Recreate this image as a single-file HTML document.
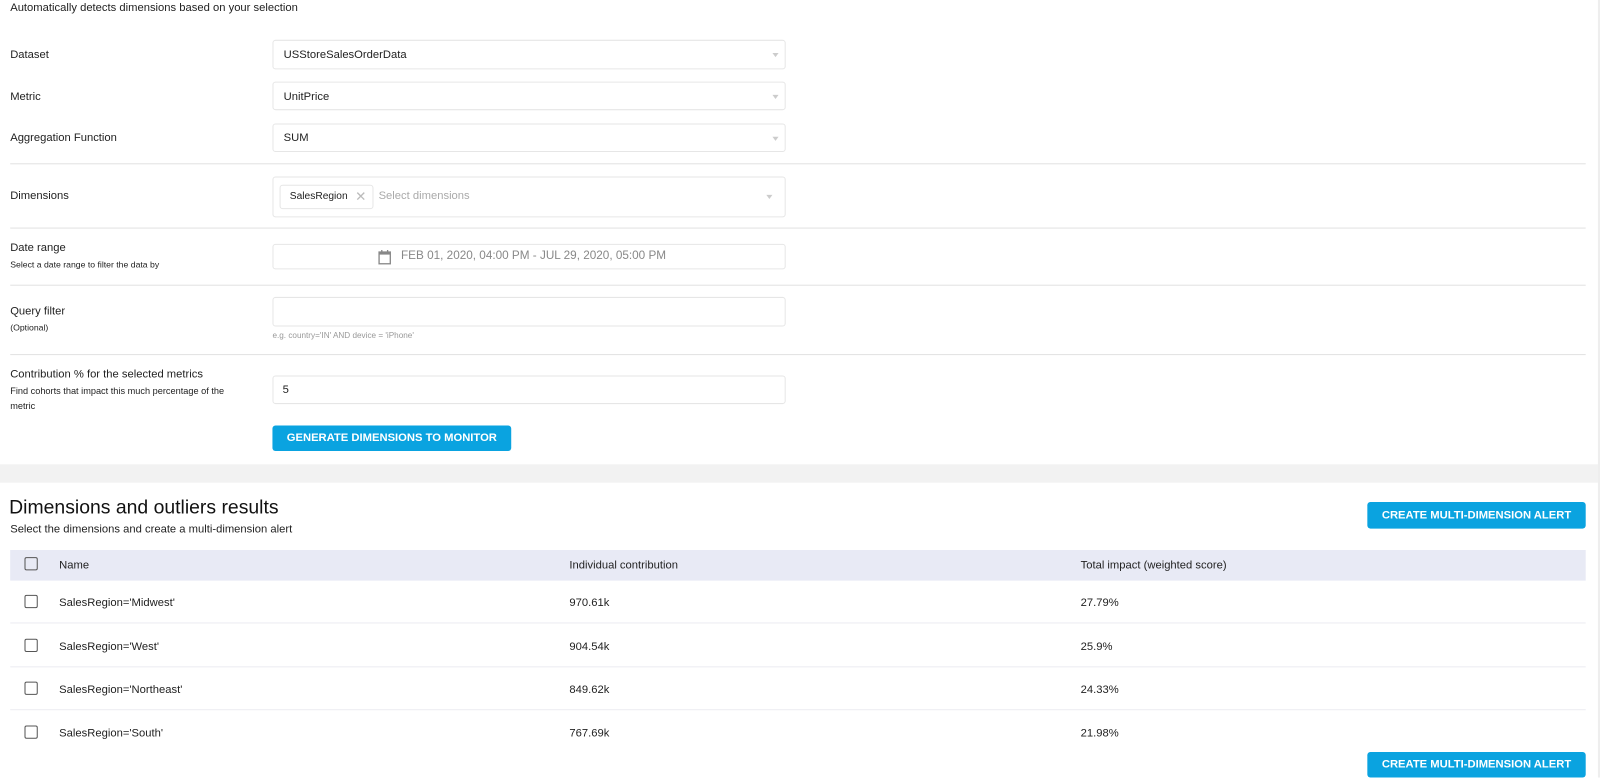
<!DOCTYPE html>
<html><head><style>
*{box-sizing:border-box;margin:0;padding:0}
body{width:1600px;height:777px;overflow:hidden;background:#fff;font-family:"Liberation Sans",sans-serif;color:#222;font-size:11px;position:relative}
#w{position:absolute;left:0;top:0;width:1568px;height:762px;transform:scale(1.0204);transform-origin:0 0}
.a{position:absolute}
.inp{position:absolute;left:267px;width:503px;border:1px solid #e6e6e6;border-radius:3px;background:#fff}
.inp span{position:absolute;left:10px;font-size:11px;color:#222}
.arr{position:absolute;right:6px;width:0;height:0;border-left:3px solid transparent;border-right:3px solid transparent;border-top:4px solid #ccc}
.hr{position:absolute;left:10px;width:1544px;height:1px;background:#e2e2e2}
.btn{position:absolute;background:#0aa3e0;color:#fff;font-weight:bold;font-size:11px;border-radius:3px;text-align:center}
.cb{position:absolute;left:24px;width:13px;height:13px;border:1.5px solid #555;border-radius:2px}
.rl{position:absolute;left:10px;width:1544px;height:1px;background:#ececf2}
</style></head><body><div id="w">
<div class="a" style="left:10px;top:2px">Automatically detects dimensions based on your selection</div>

<div class="a" style="left:10px;top:48px">Dataset</div>
<div class="inp" style="top:39px;height:29px"><span style="top:8px">USStoreSalesOrderData</span><i class="arr" style="top:12px"></i></div>
<div class="a" style="left:10px;top:89px">Metric</div>
<div class="inp" style="top:80px;height:28px"><span style="top:8px">UnitPrice</span><i class="arr" style="top:12px"></i></div>
<div class="a" style="left:10px;top:129px">Aggregation Function</div>
<div class="inp" style="top:121px;height:28px"><span style="top:7px">SUM</span><i class="arr" style="top:12px"></i></div>
<div class="hr" style="top:160px"></div>

<div class="a" style="left:10px;top:186px">Dimensions</div>
<div class="inp" style="top:173px;height:40px">
<div class="a" style="left:6px;top:7px;width:92px;height:24px;border:1px solid #e6e6e6;border-radius:3px"><span style="left:9px;top:5px;font-size:10px">SalesRegion</span><span style="left:73px;top:3px;color:#bbb;font-size:13px">✕</span></div>
<span style="left:103px;top:12px;color:#aaa">Select dimensions</span><i class="arr" style="top:17px;right:12px"></i></div>
<div class="hr" style="top:223px"></div>

<div class="a" style="left:10px;top:237px">Date range</div>
<div class="a" style="left:10px;top:254px;font-size:8.5px">Select a date range to filter the data by</div>
<div class="inp" style="top:239px;height:25px">
<svg class="a" style="left:102px;top:4px" width="14" height="16" viewBox="0 0 14 16"><rect x="1.5" y="3" width="11" height="11.5" fill="none" stroke="#888" stroke-width="1.3"/><rect x="1.5" y="3" width="11" height="2.5" fill="#888"/><rect x="3.5" y="1" width="1.3" height="3" fill="#888"/><rect x="9.2" y="1" width="1.3" height="3" fill="#888"/></svg>
<span style="left:125px;top:5px;color:#888;font-size:11.5px">FEB 01, 2020, 04:00 PM - JUL 29, 2020, 05:00 PM</span></div>
<div class="hr" style="top:279px"></div>

<div class="a" style="left:10px;top:299px">Query filter</div>
<div class="a" style="left:10px;top:316px;font-size:8.5px">(Optional)</div>
<div class="inp" style="top:291px;height:29px"></div>
<div class="a" style="left:267px;top:324px;font-size:8px;color:#999">e.g. country='IN' AND device = 'iPhone'</div>
<div class="hr" style="top:347px"></div>

<div class="a" style="left:10px;top:361px">Contribution % for the selected metrics</div>
<div class="a" style="left:10px;top:376px;font-size:9px;line-height:15px;width:232px">Find cohorts that impact this much percentage of the metric</div>
<div class="inp" style="top:368px;height:28px"><span style="left:9px;top:7px">5</span></div>
<div class="btn" style="left:267px;top:417px;width:234px;height:25px;line-height:25px">GENERATE DIMENSIONS TO MONITOR</div>

<div class="a" style="left:0;top:455px;width:1568px;height:18px;background:#f2f2f2"></div>
<div class="a" style="left:1566px;top:0;width:2px;height:762px;background:#eee"></div>

<div class="a" style="left:9px;top:487px;font-size:19px;color:#111">Dimensions and outliers results</div>
<div class="a" style="left:10px;top:513px">Select the dimensions and create a multi-dimension alert</div>
<div class="btn" style="left:1340px;top:492px;width:214px;height:26px;line-height:26px">CREATE MULTI-DIMENSION ALERT</div>

<div class="a" style="left:10px;top:539px;width:1544px;height:30px;background:#e8eaf5"></div>
<div class="cb" style="top:546px"></div>
<div class="a" style="left:58px;top:548px">Name</div>
<div class="a" style="left:558px;top:548px">Individual contribution</div>
<div class="a" style="left:1059px;top:548px">Total impact (weighted score)</div>

<div class="cb" style="top:583px"></div><div class="a" style="left:58px;top:585px">SalesRegion='Midwest'</div><div class="a" style="left:558px;top:585px">970.61k</div><div class="a" style="left:1059px;top:585px">27.79%</div>
<div class="rl" style="top:610px"></div>
<div class="cb" style="top:626px"></div><div class="a" style="left:58px;top:628px">SalesRegion='West'</div><div class="a" style="left:558px;top:628px">904.54k</div><div class="a" style="left:1059px;top:628px">25.9%</div>
<div class="rl" style="top:653px"></div>
<div class="cb" style="top:668px"></div><div class="a" style="left:58px;top:670px">SalesRegion='Northeast'</div><div class="a" style="left:558px;top:670px">849.62k</div><div class="a" style="left:1059px;top:670px">24.33%</div>
<div class="rl" style="top:695px"></div>
<div class="cb" style="top:711px"></div><div class="a" style="left:58px;top:713px">SalesRegion='South'</div><div class="a" style="left:558px;top:713px">767.69k</div><div class="a" style="left:1059px;top:713px">21.98%</div>

<div class="btn" style="left:1340px;top:737px;width:214px;height:25px;line-height:25px">CREATE MULTI-DIMENSION ALERT</div>
</div></body></html>
